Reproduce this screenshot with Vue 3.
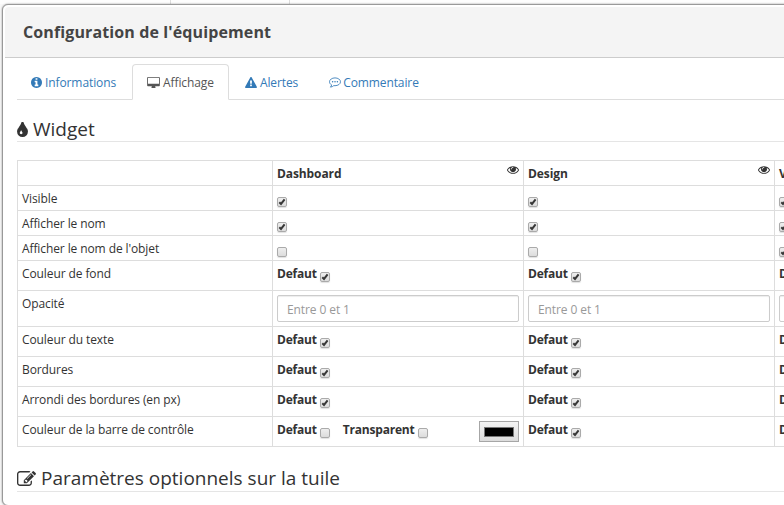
<script setup>
const columns = ['Dashboard', 'Design', 'View']
const rows = [
  { label: 'Visible', kind: 'check', values: [true, true, true] },
  { label: 'Afficher le nom', kind: 'check', values: [true, true, true] },
  { label: "Afficher le nom de l'objet", kind: 'check', values: [false, false, true] },
  { label: 'Couleur de fond', kind: 'default', values: [true, true, true] },
  { label: 'Opacité', kind: 'input', values: ['', '', ''] },
  { label: 'Couleur du texte', kind: 'default', values: [true, true, true] },
  { label: 'Bordures', kind: 'default', values: [true, true, true] },
  { label: 'Arrondi des bordures (en px)', kind: 'default', values: [true, true, true] },
  { label: 'Couleur de la barre de contrôle', kind: 'default', values: [false, true, true], picker: true },
]
const tickPath = 'M1.3 4.2 L3 5.9 L6.6 1.4'
</script>

<template>
  <div class="page">
    <div class="backdrop"><div class="backdrop-tab"></div></div>
    <div class="modal">
      <header class="title">Configuration de l'équipement</header>
      <main class="content">
        <nav class="tabs">
          <a class="tab">
            <svg class="ic-info" viewBox="128 128 1536 1536"><path fill="currentColor" d="M1152 1376v-160q0-14-9-23t-23-9h-96v-512q0-14-9-23t-23-9h-320q-14 0-23 9t-9 23v160q0 14 9 23t23 9h96v320h-96q-14 0-23 9t-9 23v160q0 14 9 23t23 9h448q14 0 23-9t9-23zm-128-896v-160q0-14-9-23t-23-9h-192q-14 0-23 9t-9 23v160q0 14 9 23t23 9h192q14 0 23-9t9-23zm640 416q0 209-103 385.5t-279.5 279.5-385.5 103-385.5-103-279.5-279.5-103-385.5 103-385.5 279.5-279.5 385.5-103 385.5 103 279.5 279.5 103 385.5z" /></svg>
            <span>Informations</span>
          </a>
          <a class="tab active">
            <svg class="ic-desktop" viewBox="-64 0 1920 1664"><path fill="currentColor" d="M1728 992v-832q0-13-9.5-22.5t-22.5-9.5h-1600q-13 0-22.5 9.5t-9.5 22.5v832q0 13 9.5 22.5t22.5 9.5h1600q13 0 22.5-9.5t9.5-22.5zm128-832v1088q0 66-47 113t-113 47h-544q0 37 16 77.5t32 71 16 43.5q0 26-19 45t-45 19h-512q-26 0-45-19t-19-45q0-14 16-44t32-70 16-78h-544q-66 0-113-47t-47-113v-1088q0-66 47-113t113-47h1600q66 0 113 47t47 113z" /></svg>
            <span>Affichage</span>
          </a>
          <a class="tab">
            <svg class="ic-warning" viewBox="0 0 1792 1664"><path fill="currentColor" d="M1024 1375v-190q0-14-9.5-23.5t-22.5-9.5h-192q-13 0-22.5 9.5t-9.5 23.5v190q0 14 9.5 23.5t22.5 9.5h192q13 0 22.5-9.5t9.5-23.5zm-2-374l18-459q0-12-10-19-13-11-24-11h-220q-11 0-24 11-10 7-10 21l17 457q0 10 10 16.5t24 6.5h185q14 0 23.5-6.5t10.5-16.5zm-14-934l768 1408q35 63-2 126-17 29-46.5 46t-63.5 17h-1536q-34 0-63.5-17t-46.5-46q-37-63-2-126l768-1408q17-31 47-49t65-18 65 18 47 49z" /></svg>
            <span>Alertes</span>
          </a>
          <a class="tab">
            <svg class="ic-comment" viewBox="0 0 12 11">
              <path fill="none" stroke="currentColor" stroke-width=".85" stroke-linejoin="round" d="M6 .9C3 .9.5 2.6.5 4.8c0 1.3.8 2.4 2.1 3.1-.1.9-.5 1.5-1.2 2.2 1.5-.1 2.6-.7 3.4-1.5.4.1.8.1 1.2.1 3 0 5.5-1.7 5.5-3.9S9 .9 6 .9z" />
              <g fill="currentColor"><circle cx="3.6" cy="4.8" r=".75" /><circle cx="6" cy="4.8" r=".75" /><circle cx="8.4" cy="4.8" r=".75" /></g>
            </svg>
            <span>Commentaire</span>
          </a>
        </nav>

        <h2 class="legend first">
          <svg class="ic-tint" viewBox="384 128 1024 1408"><path fill="currentColor" d="M896 1152q0-36-20-69-1-1-15.5-22.5t-25.5-38-25-44-21-50.5q-4-16-21-16t-21 16q-7 23-21 50.5t-25 44-25.5 38-15.5 22.5q-20 33-20 69 0 53 37.5 90.5t90.5 37.5 90.5-37.5 37.5-90.5zm512-128q0 212-150 362t-362 150-362-150-150-362q0-145 81-275 6-9 62.5-90.5t101-151 99.5-178 83-201.5q9-30 34-47t51-17 51.5 17 33.5 47q28 93 83 201.5t99.5 178 101 151 62.5 90.5q81 127 81 275z" /></svg>
          <span>Widget</span>
        </h2>

        <table class="grid">
          <colgroup><col class="c-label" /><col v-for="c in columns" :key="c" class="c-value" /></colgroup>
          <thead>
            <tr class="h-check">
              <th></th>
              <th v-for="c in columns" :key="c">
                <div class="head-cell">
                  <span>{{ c }}</span>
                  <svg class="ic-eye" viewBox="0 384 1792 1152"><path fill="currentColor" d="M1664 960q-152-236-381-353 61 104 61 225 0 185-131.5 316.5t-316.5 131.5-316.5-131.5-131.5-316.5q0-121 61-225-229 117-381 353 133 205 333.5 326.5t434.5 121.5 434.5-121.5 333.5-326.5zm-720-384q0-20-14-34t-34-14q-125 0-214.5 89.5t-89.5 214.5q0 20 14 34t34 14 34-14 14-34q0-86 61-147t147-61q20 0 34-14t14-34zm848 384q0 34-20 69-140 230-376.5 368.5t-499.5 138.5-499.5-139-376.5-368q-20-35-20-69t20-69q140-229 376.5-368t499.5-139 499.5 139 376.5 368q20 35 20 69z" /></svg>
                </div>
              </th>
            </tr>
          </thead>
          <tbody>
            <tr v-for="row in rows" :key="row.label" :class="'h-' + row.kind">
              <td>{{ row.label }}</td>
              <td v-for="(v, i) in row.values" :key="i">
                <input v-if="row.kind === 'input'" class="field" placeholder="Entre 0 et 1" />
                <div v-else class="options">
                  <b v-if="row.kind === 'default'">Defaut</b>
                  <span class="box"><svg v-if="v" viewBox="0 0 8 8"><path :d="tickPath" /></svg></span>
                  <template v-if="row.picker && i === 0">
                    <b class="transparent">Transparent</b>
                    <span class="box"></span>
                    <span class="picker"><span class="swatch"></span></span>
                  </template>
                </div>
              </td>
            </tr>
          </tbody>
        </table>

        <h2 class="legend second">
          <svg class="ic-edit" viewBox="0 128 1792 1408"><path fill="currentColor" d="M888 1184l116-116-152-152-116 116v56h96v96h56zm440-720q-16-16-33 1l-350 350q-17 17-1 33t33-1l350-350q17-17 1-33zm80 594v190q0 119-84.5 203.5t-203.5 84.5h-832q-119 0-203.5-84.5t-84.5-203.5v-832q0-119 84.5-203.5t203.5-84.5h832q63 0 117 25 15 7 18 23 3 17-9 29l-49 49q-14 14-32 8-23-6-45-6h-832q-66 0-113 47t-47 113v832q0 66 47 113t113 47h832q66 0 113-47t47-113v-126q0-13 9-22l64-64q15-15 35-7t20 29zm-96-738l288 288-672 672h-288v-288zm444 132l-92 92-288-288 92-92q28-28 68-28t68 28l152 152q28 28 28 68t-28 68z" /></svg>
          <span>Paramètres optionnels sur la tuile</span>
        </h2>
      </main>
    </div>
  </div>
</template>

<style>
body { margin: 0; overflow: hidden; }
</style>

<style scoped>
* { box-sizing: border-box; }
.page {
  width: 784px;
  height: 505px;
  overflow: hidden;
  background: #f8f8f8;
  font-family: "Open Sans", "Noto Sans", sans-serif;
  font-size: 12px;
  line-height: 17px;
  letter-spacing: -.1px;
  color: #333;
}
.backdrop { height: 4px; padding-left: 170px; background: #fdfdfd; }
.backdrop-tab { width: 120px; height: 4px; border: solid #ddd; border-width: 0 1px; }
.modal {
  width: 1100px;
  height: 502px;
  margin-left: 2px;
  padding: 2px;
  border: 1px solid #999;
  border-radius: 6px;
  background: #fff;
  box-shadow: 0 0 2px rgba(0, 0, 0, .45);
}
.title {
  height: 51px;
  padding: 0 18px;
  border-bottom: 1px solid #ccc;
  border-radius: 4px 4px 0 0;
  background: #f4f4f4;
  color: #444;
  font-size: 16px;
  font-weight: 700;
  line-height: 50px;
  letter-spacing: .12px;
}
.content { padding: 6px 12px 0; }
.tabs { display: flex; height: 36px; border-bottom: 1px solid #ddd; }
.tab {
  display: flex;
  align-items: center;
  height: 36px;
  margin-right: 2px;
  padding: 1px 13px 0;
  border: 1px solid transparent;
  border-radius: 4px 4px 0 0;
  color: #337ab7;
}
.tab span { margin-left: 3px; }
.tab.active { padding: 1px 14px 0; border-color: #ddd #ddd #fff; background: #fff; color: #555; }
.tab svg { display: block; flex: none; }
.ic-info { width: 11px; height: 11px; }
.ic-desktop { width: 13px; height: 11px; }
.ic-warning { width: 12px; height: 11px; }
.ic-comment { width: 12px; height: 11px; }
.tab:last-child { padding-left: 14px; }
.tab:last-child span { margin-left: 2px; }
.legend {
  display: flex;
  align-items: center;
  height: 26px;
  margin: 0;
  border-bottom: 1px solid #e5e5e5;
  font-size: 19px;
  font-weight: 400;
  line-height: 25px;
  letter-spacing: 0;
}
.first { margin-top: 16px; margin-bottom: 18px; padding-top: 1px; }
.second { margin-top: 19px; }
.ic-tint { width: 11px; height: 15px; margin-right: 5px; }
.ic-edit { width: 19px; height: 15px; margin-right: 5px; }
.grid { width: 1009px; table-layout: fixed; border-collapse: collapse; }
.c-label { width: 255px; }
.c-value { width: 251px; }
.grid th, .grid td {
  padding: 4px 4px 0;
  border: 1px solid #ddd;
  text-align: left;
  vertical-align: top;
}
.h-check { height: 25px; }
.h-default { height: 30px; }
.h-input { height: 36px; }
.head-cell { display: flex; justify-content: space-between; height: 17px; }
.ic-eye { width: 12px; height: 8px; margin-top: 1px; }
.options { display: flex; height: 17px; }
.options b { letter-spacing: -.2px; }
.box {
  display: block;
  flex: none;
  width: 10px;
  height: 10px;
  margin-top: 7px;
  border: 1px solid #aaa;
  border-radius: 2px;
  background: linear-gradient(#eee, #dcdcdc);
  box-shadow: 0 1px 1px rgba(0, 0, 0, .12);
}
.box svg { display: block; width: 8px; height: 8px; }
.box path { fill: none; stroke: #383838; stroke-width: 2; }
b + .box { margin-left: 3px; }
.transparent { margin-left: 13px; }
.picker {
  width: 40px;
  height: 21px;
  margin-left: auto;
  padding: 5px 4px;
  border: 1px solid #a6a6a6;
  background: linear-gradient(#f4f4f4, #dcdcdc);
}
.swatch { display: block; height: 10px; border: 1px solid #777; background: #000; }
.field {
  display: block;
  width: 242px;
  height: 27px;
  padding: 2px 9px 0;
  border: 1px solid #ccc;
  border-radius: 2px;
  background: #fff;
  box-shadow: inset 0 1px 1px rgba(0, 0, 0, .075);
  font: inherit;
  letter-spacing: -.1px;
}
.field::placeholder { color: #999; opacity: 1; }
</style>
